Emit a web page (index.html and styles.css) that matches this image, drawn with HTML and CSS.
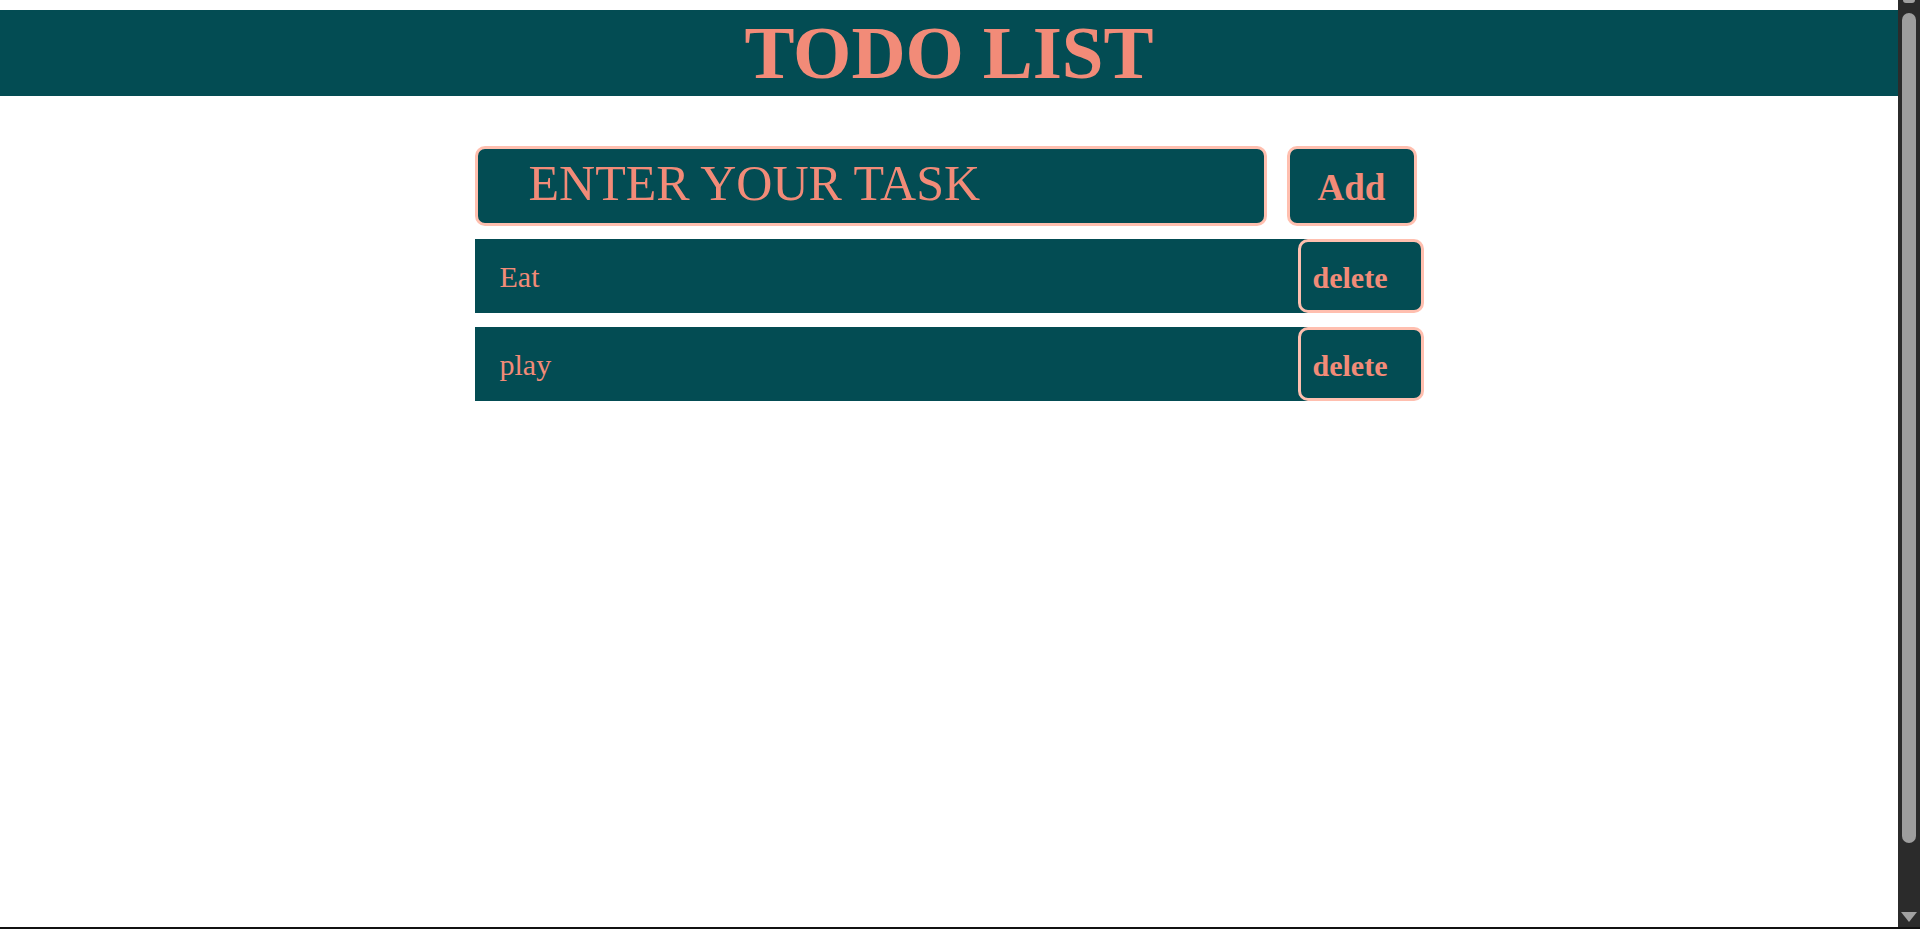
FILE: index.html
```html
<!DOCTYPE html>
<html lang="en">
<head>
<meta charset="utf-8">
<title>Todo List</title>
<link rel="stylesheet" href="styles.css">
</head>
<body>
<div class="page">
  <main class="main">
    <header class="header">
      <h1 class="title">TODO LIST</h1>
    </header>
    <section class="todo">
      <form class="todo-form">
        <input class="todo-input" type="text" placeholder="ENTER YOUR TASK">
        <button class="add-btn" type="button">Add</button>
      </form>
      <ul class="todo-list">
        <li class="todo-item">
          <span class="todo-text">Eat</span>
          <button class="delete-btn" type="button">delete</button>
        </li>
        <li class="todo-item">
          <span class="todo-text">play</span>
          <button class="delete-btn" type="button">delete</button>
        </li>
      </ul>
    </section>
  </main>
  <aside class="scrollbar" aria-hidden="true">
    <div class="sb-up"></div>
    <div class="sb-thumb"></div>
    <div class="sb-down"></div>
  </aside>
</div>
<div class="bottom-line"></div>
</body>
</html>
```

FILE: styles.css
```css
html, body {
  margin: 0;
  padding: 0;
  height: 100%;
  overflow: hidden;
  background: #ffffff;
}

body {
  font-family: "Liberation Serif", "Times New Roman", serif;
}

.page {
  display: grid;
  grid-template-columns: 1fr 22px;
  height: 100vh;
}

.main {
  min-width: 0;
  padding-top: 10px;
}

.header {
  background: #034c53;
  height: 86px;
}

.title {
  margin: 0;
  text-align: center;
  font-size: 75px;
  line-height: 86px;
  font-weight: bold;
  color: #f28b78;
}

.todo {
  width: 949px;
  margin: 50px auto 0;
}

.todo-form {
  display: flex;
  gap: 20px;
  margin: 0 0 13px;
}

.todo-input {
  box-sizing: border-box;
  width: 792px;
  height: 80px;
  padding: 0 0 6px 51px;
  background: #034c53;
  border: 3px solid #ffbfaf;
  border-radius: 10px;
  font-family: "Liberation Serif", "Times New Roman", serif;
  font-size: 50px;
  color: #f28b78;
  outline: none;
}

.todo-input::placeholder {
  color: #f28b78;
  opacity: 1;
}

.add-btn {
  box-sizing: border-box;
  width: 130px;
  height: 80px;
  padding: 2px 0 0;
  background: #034c53;
  border: 3px solid #ffbfaf;
  border-radius: 10px;
  font-family: "Liberation Serif", "Times New Roman", serif;
  font-weight: bold;
  font-size: 37px;
  color: #f28b78;
}

.todo-list {
  list-style: none;
  margin: 0;
  padding: 0;
  display: flex;
  flex-direction: column;
  gap: 14px;
}

.todo-item {
  display: flex;
  align-items: stretch;
  height: 74px;
}

.todo-text {
  flex: 1;
  display: flex;
  align-items: center;
  padding: 2px 12px 0 25px;
  background: #034c53;
  font-size: 30px;
  color: #f28b78;
}

.delete-btn {
  box-sizing: border-box;
  width: 126px;
  height: 74px;
  margin-left: -12px;
  padding: 4px 0 0 12px;
  text-align: left;
  background: #034c53;
  border: 3px solid #ffbfaf;
  border-radius: 10px;
  font-family: "Liberation Serif", "Times New Roman", serif;
  font-weight: bold;
  font-size: 30px;
  color: #f28b78;
}

.scrollbar {
  background: #2b2b2b;
  height: 100vh;
  display: flex;
  flex-direction: column;
  align-items: center;
}

.sb-up {
  width: 12px;
  height: 3px;
  background: #a0a0a0;
  border-radius: 0 0 3px 3px;
}

.sb-thumb {
  width: 14px;
  margin-top: 10px;
  height: 830px;
  background: #9e9e9e;
  border-radius: 7px;
}

.sb-down {
  margin-top: auto;
  margin-bottom: 7px;
  width: 0;
  height: 0;
  border-left: 8px solid transparent;
  border-right: 8px solid transparent;
  border-top: 10px solid #a0a0a0;
}

.bottom-line {
  position: fixed;
  left: 0;
  right: 0;
  bottom: 0;
  height: 2px;
  background: #111111;
}
```
